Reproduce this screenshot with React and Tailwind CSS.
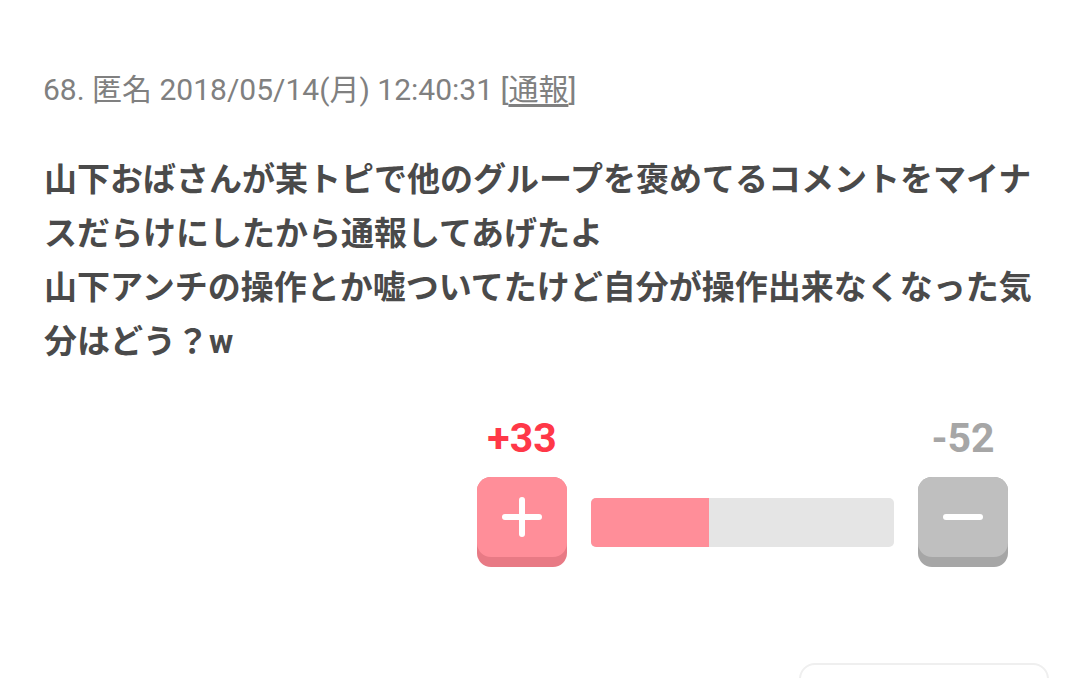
const jp = { fontFamily: 'Roboto, "Noto Sans CJK JP", sans-serif' };

const VoteButton = ({ top, bottom, minus }) => (
  <div className={`w-[90px] h-[90px] rounded-[14px] ${bottom}`}>
    <div className={`h-[80px] rounded-[14px] ${top} flex items-center justify-center`}>
      <svg width="40" height="40" viewBox="0 0 40 40">
        <line x1="3" y1="20" x2="37" y2="20" stroke="white" strokeWidth="6" strokeLinecap="round" />
        {!minus && <line x1="20" y1="3" x2="20" y2="37" stroke="white" strokeWidth="6" strokeLinecap="round" />}
      </svg>
    </div>
  </div>
);

export default function App() {
  const plus = 33;
  const minus = 52;
  const ratio = (plus / (plus + minus)) * 100;

  return (
    <div className="w-[1080px] h-[678px] overflow-hidden bg-white px-[44px] pt-[72px]" style={jp}>
      {/* header */}
      <p className="-ml-[1px] text-[30px] leading-[36px] text-[#808080]">
        68. 匿名 2018/05/14(月) 12:40:31 [<span className="underline underline-offset-4">通報</span>]
      </p>

      {/* body */}
      <p className="mt-[45px] text-[33px] leading-[54px] font-bold text-[#4a4a4a]">
        山下おばさんが某トピで他のグループを褒めてるコメントをマイナスだらけにしたから通報してあげたよ
        <br />
        山下アンチの操作とか嘘ついてたけど自分が操作出来なくなった気分はどう？w
      </p>

      {/* votes */}
      <div className="mt-[46px] ml-auto mr-[28px] w-[531px]">
        <div className="flex justify-between">
          <span className="w-[90px] text-center text-[41px] leading-[46px] font-bold text-[#ff3848]">+{plus}</span>
          <span className="w-[90px] text-center text-[41px] leading-[46px] font-bold text-[#a6a6a6]">-{minus}</span>
        </div>
        <div className="mt-[16px] flex items-center gap-[24px]">
          <VoteButton top="bg-[#ff8e99]" bottom="bg-[#e87a85]" />
          <div className="flex-1 h-[49px] rounded-[5px] bg-[#e5e5e5] overflow-hidden flex">
            <div className="h-full bg-[#ff8e99]" style={{ width: `${ratio}%` }} />
          </div>
          <VoteButton top="bg-[#bfbfbf]" bottom="bg-[#a6a6a6]" minus />
        </div>
      </div>

      {/* next card */}
      <div className="mt-[96px] ml-auto mr-[-13px] w-[250px] h-[60px] rounded-[16px] border-2 border-[#efefef]" />
    </div>
  );
}
